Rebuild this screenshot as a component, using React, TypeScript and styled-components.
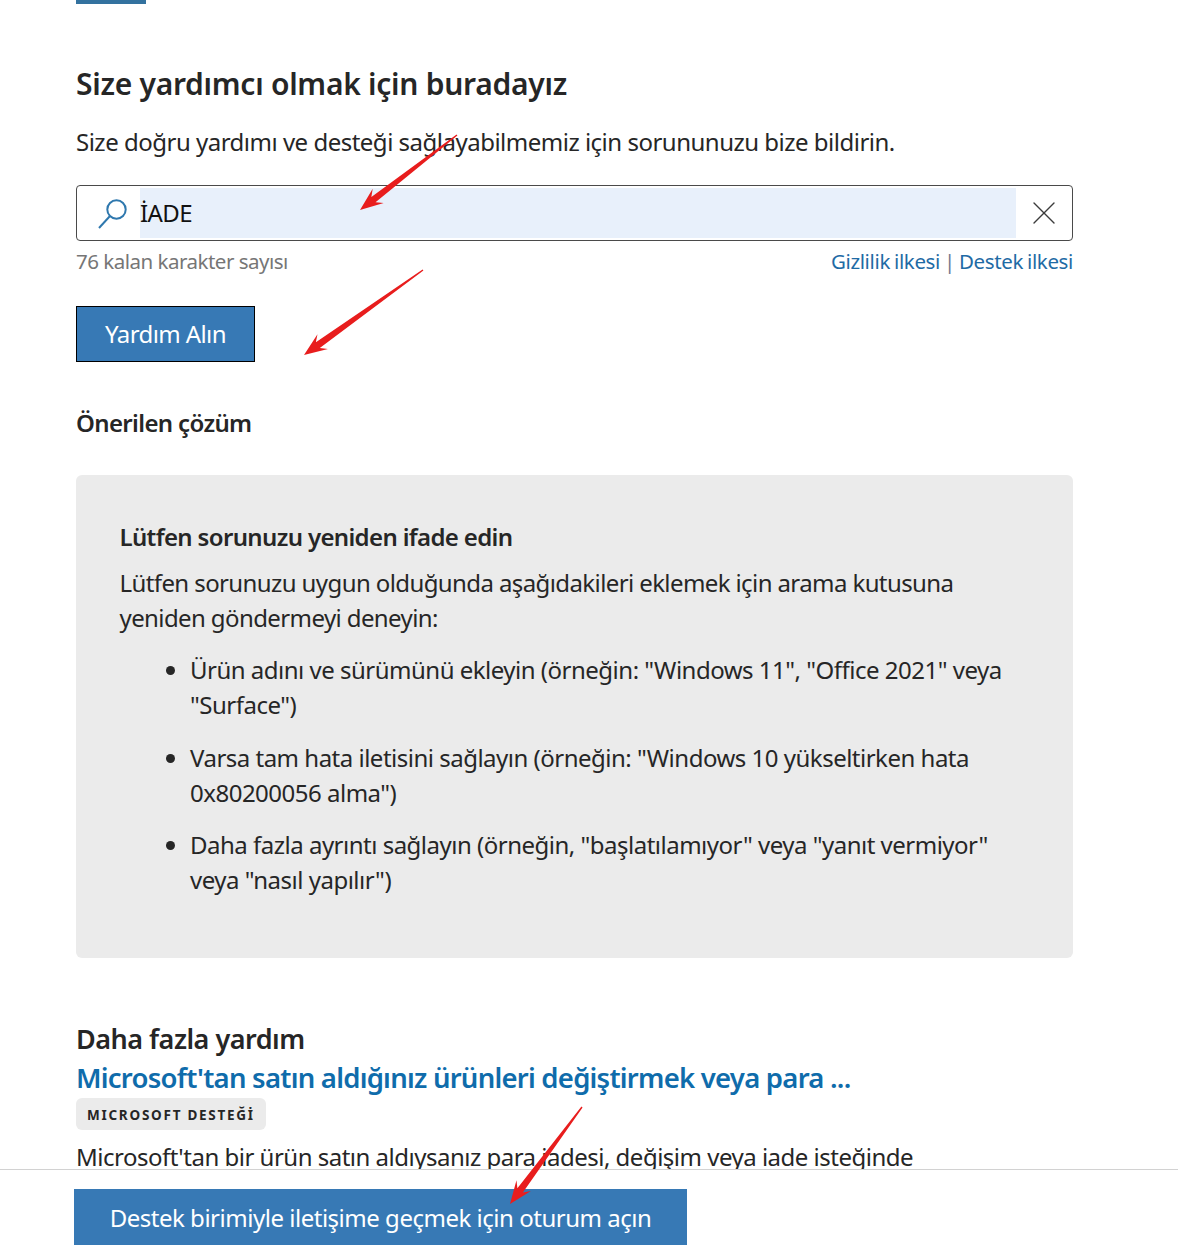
import styled, { createGlobalStyle } from 'styled-components';
import { X } from 'lucide-react';

const GlobalStyle = createGlobalStyle`
  html, body {
    margin: 0;
    padding: 0;
    background: #fff;
  }

  body {
    font-family: 'Noto Sans', 'Open Sans', 'Liberation Sans', sans-serif;
    color: #262626;
  }

  * {
    box-sizing: border-box;
  }
`;

interface ArrowProps {
  from: [number, number];
  to: [number, number];
}

// red annotation arrow: thin tail, widening towards the head
const arrowPoints = ({ from, to }: ArrowProps) => {
  const dx = to[0] - from[0];
  const dy = to[1] - from[1];
  const len = Math.hypot(dx, dy);
  const ux = dx / len;
  const uy = dy / len;
  const nx = -uy;
  const ny = ux;
  const at = (back: number, side: number) =>
    `${to[0] - ux * back + nx * side},${to[1] - uy * back + ny * side}`;
  return [
    at(len, 0.7),
    at(17, 3.4),
    at(23, 9),
    at(0, 0),
    at(23, -9),
    at(17, -3.4),
    at(len, -0.7),
  ].join(' ');
};

const arrows: ArrowProps[] = [
  { from: [457, 135], to: [360, 210] },
  { from: [423, 270], to: [304, 355] },
  { from: [582, 1107], to: [510, 1204] },
];

const bullets = [
  'Ürün adını ve sürümünü ekleyin (örneğin: "Windows 11", "Office 2021" veya "Surface")',
  'Varsa tam hata iletisini sağlayın (örneğin: "Windows 10 yükseltirken hata 0x80200056 alma")',
  'Daha fazla ayrıntı sağlayın (örneğin, "başlatılamıyor" veya "yanıt vermiyor" veya "nasıl yapılır")',
];

const App = () => {
  return (
    <Page>
      <GlobalStyle />
      <Main>
        <TabMark />
        <Heading>Size yardımcı olmak için buradayız</Heading>
        <Lead>Size doğru yardımı ve desteği sağlayabilmemiz için sorununuzu bize bildirin.</Lead>
        <SearchBox>
          <SearchIcon viewBox="0 0 32 32" aria-hidden>
            <circle cx="19.5" cy="11.5" r="9.2" />
            <path d="M13 18 L2 30" />
          </SearchIcon>
          <SearchValue>İADE</SearchValue>
          <ClearButton>
            <X size={40} strokeWidth={1.4} absoluteStrokeWidth />
          </ClearButton>
        </SearchBox>
        <SearchMeta>
          <Counter>76 kalan karakter sayısı</Counter>
          <PolicyLinks>
            <a href="#gizlilik">Gizlilik ilkesi</a> <span>|</span>{' '}
            <a href="#destek">Destek ilkesi</a>
          </PolicyLinks>
        </SearchMeta>
        <HelpButton>Yardım Alın</HelpButton>
        <SubHeading>Önerilen çözüm</SubHeading>
        <SolutionCard>
          <CardTitle>Lütfen sorunuzu yeniden ifade edin</CardTitle>
          <CardText>
            Lütfen sorunuzu uygun olduğunda aşağıdakileri eklemek için arama kutusuna yeniden
            göndermeyi deneyin:
          </CardText>
          <BulletList>
            {bullets.map((bullet) => (
              <li key={bullet}>{bullet}</li>
            ))}
          </BulletList>
        </SolutionCard>
        <MoreHeading>Daha fazla yardım</MoreHeading>
        <ArticleLink href="#makale">Microsoft'tan satın aldığınız ürünleri değiştirmek veya para ...</ArticleLink>
        <SourceBadge>MICROSOFT DESTEĞİ</SourceBadge>
        <ArticleText>
          Microsoft'tan bir ürün satın aldıysanız para iadesi, değişim veya iade isteğinde
        </ArticleText>
      </Main>
      <Footer>
        <SignInButton>Destek birimiyle iletişime geçmek için oturum açın</SignInButton>
      </Footer>
      <Annotations viewBox="0 0 1178 1253" aria-hidden>
        {arrows.map((arrow) => (
          <polygon key={arrow.to.join()} points={arrowPoints(arrow)} />
        ))}
      </Annotations>
    </Page>
  );
};

export default App;

const Page = styled.div`
  position: relative;
  width: 1178px;
  height: 1253px;
  overflow: hidden;
  background: #fff;
`;

const Main = styled.main`
  width: 997px;
  margin-left: 76px;
`;

const TabMark = styled.div`
  width: 70px;
  height: 4px;
  background: #33729f;
`;

const Heading = styled.h1`
  margin: 60px 0 0;
  font-size: 30px;
  line-height: 40px;
  font-weight: 600;
  letter-spacing: -0.27px;
`;

const Lead = styled.p`
  margin: 20px 0 0;
  font-size: 24px;
  line-height: 36px;
  letter-spacing: -0.5px;
`;

const SearchBox = styled.div`
  display: flex;
  align-items: stretch;
  height: 56px;
  margin-top: 25px;
  padding: 2px 0;
  background: #fff;
  border: 1px solid #4a4a4a;
  border-radius: 4px;
`;

const SearchIcon = styled.svg`
  width: 32px;
  height: 32px;
  margin: 10px 0 0 20px;
  flex: none;
  fill: none;
  stroke: #2f78ae;
  stroke-width: 2;
`;

const SearchValue = styled.div`
  flex: 1;
  margin-left: 11px;
  background: #e8f0fb;
  font-size: 24px;
  line-height: 50px;
  letter-spacing: -0.6px;
  color: #111;
`;

const ClearButton = styled.div`
  width: 56px;
  flex: none;
  display: flex;
  align-items: center;
  justify-content: center;
  color: #3c3c3c;
`;

const SearchMeta = styled.div`
  display: flex;
  justify-content: space-between;
  align-items: center;
  height: 30px;
  margin-top: 5px;
`;

const Counter = styled.span`
  font-size: 20.5px;
  letter-spacing: -0.5px;
  color: #767676;
`;

const PolicyLinks = styled.div`
  font-size: 20.5px;
  letter-spacing: -0.36px;
  word-spacing: -1px;
  color: #6f7890;

  a {
    color: #1f6ba5;
    text-decoration: none;
  }
`;

const HelpButton = styled.button`
  display: block;
  width: 179px;
  height: 56px;
  margin-top: 30px;
  padding: 0 0 2px;
  background: #3779b5;
  border: 1px solid #000;
  color: #fff;
  font-family: inherit;
  font-size: 24px;
  letter-spacing: -0.6px;
`;

const SubHeading = styled.h2`
  margin: 43px 0 0;
  font-size: 24px;
  line-height: 36px;
  font-weight: 600;
  letter-spacing: -0.64px;
`;

const SolutionCard = styled.section`
  height: 483px;
  margin-top: 34px;
  padding: 44px 44px 44px 43.5px;
  background: #ebebeb;
  border-radius: 6px;
`;

const CardTitle = styled.h3`
  margin: 0;
  font-size: 24px;
  line-height: 36px;
  font-weight: 600;
  letter-spacing: -0.65px;
`;

const CardText = styled.p`
  margin: 10px 0 0;
  font-size: 24px;
  line-height: 35px;
  letter-spacing: -0.6px;
`;

const BulletList = styled.ul`
  margin: 17px 0 0;
  padding: 0 0 0 70.5px;

  li {
    margin-bottom: 17.6px;
    font-size: 24px;
    line-height: 35px;
    letter-spacing: -0.5px;
  }
`;

const MoreHeading = styled.h2`
  margin: 62px 0 0;
  font-size: 27px;
  line-height: 38px;
  font-weight: 600;
  letter-spacing: -0.5px;
`;

const ArticleLink = styled.a`
  display: block;
  font-size: 27.5px;
  line-height: 40px;
  font-weight: 600;
  letter-spacing: -0.76px;
  color: #0f6cab;
  text-decoration: none;
`;

const SourceBadge = styled.div`
  width: fit-content;
  height: 32px;
  margin-top: 0;
  padding: 0 11px;
  background: #ebebeb;
  border-radius: 6px;
  font-size: 13.5px;
  line-height: 34px;
  font-weight: 700;
  letter-spacing: 1.74px;
`;

const ArticleText = styled.p`
  margin: 9px 0 0;
  font-size: 24px;
  line-height: 36px;
  letter-spacing: -0.5px;
  white-space: nowrap;
`;

const Footer = styled.footer`
  position: absolute;
  left: 0;
  right: 0;
  bottom: 0;
  height: 84px;
  padding: 19px 0 0 74px;
  background: #fff;
  border-top: 1px solid #d2d2d2;
`;

const SignInButton = styled.button`
  display: block;
  width: 613px;
  height: 56px;
  padding: 0;
  background: #3779b5;
  border: 0;
  color: #fff;
  font-family: inherit;
  font-size: 24px;
  letter-spacing: -0.48px;
`;

const Annotations = styled.svg`
  position: absolute;
  inset: 0;
  width: 1178px;
  height: 1253px;
  pointer-events: none;
  fill: #e81d1d;
`;
